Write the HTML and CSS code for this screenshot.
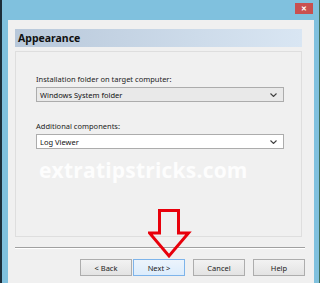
FILE: index.html
```html
<!DOCTYPE html>
<html lang="en">
<head>
    <meta charset="UTF-8">
    <title>Setup - Appearance</title>
    <link rel="stylesheet" href="styles.css">
</head>
<body>

<div class="frame">
    <!-- title bar -->
    <div class="titlebar">
        <div class="close-btn">&#x2715;</div>
    </div>

    <!-- dialog client area -->
    <div class="client">
        <div class="page-header">Appearance</div>

        <div class="panel">
            <label class="field-label">Installation folder on target computer:</label>
            <div class="combo combo-gray">
                <span>Windows System folder</span>
                <svg class="chev" width="7" height="4" viewBox="0 0 7 4"><path d="M0.5 0.5 L3.5 3.5 L6.5 0.5" fill="none" stroke="#404040" stroke-width="1.1"/></svg>
            </div>

            <label class="field-label second">Additional components:</label>
            <div class="combo">
                <span>Log Viewer</span>
                <svg class="chev" width="7" height="4" viewBox="0 0 7 4"><path d="M0.5 0.5 L3.5 3.5 L6.5 0.5" fill="none" stroke="#404040" stroke-width="1.1"/></svg>
            </div>

            <div class="watermark">extratipstricks.com</div>
        </div>

        <div class="separator"></div>

        <div class="buttons">
            <button class="btn">&lt; Back</button>
            <button class="btn btn-default">Next &gt;</button>
            <button class="btn gap">Cancel</button>
            <button class="btn gap">Help</button>
        </div>
    </div>

    <!-- red arrow annotation -->
    <svg class="arrow" width="44" height="52" viewBox="148 208 44 52">
        <polygon points="159.5,210.5 178.5,210.5 178.5,233 188.5,233 169,256 149.5,233 159.5,233" fill="none" stroke="#e8000b" stroke-width="3"/>
    </svg>
</div>

</body>
</html>
```

FILE: styles.css
```css
/* general */
body {
    margin: 0;
    padding: 0;
    width: 320px;
    height: 283px;
    overflow: hidden;
    font-family: 'Noto Sans', 'Liberation Sans', sans-serif;
    color: #1a1a1a;
}

.frame {
    position: relative;
    width: 320px;
    height: 283px;
    background: #80c1de;
    border-left: 2px solid #1d2e3a;
    border-right: 1px solid #3f6e5a;
    box-sizing: border-box;
    display: flex;
    flex-direction: column;
}

/* title bar */
.titlebar {
    height: 20px;
    display: flex;
    justify-content: flex-end;
    padding-top: 3px;
    padding-right: 6px;
    box-sizing: border-box;
}

.close-btn {
    width: 18px;
    height: 11px;
    background: #c9504f;
    color: #fff;
    font-size: 7px;
    font-weight: bold;
    line-height: 11px;
    text-align: center;
}

/* client */
.client {
    flex: 1;
    margin-left: 6px;
    margin-right: 5px;
    background: #f0f0f0;
    padding: 9px 0 0 7px;
    display: flex;
    flex-direction: column;
}

.page-header {
    width: 287px;
    height: 18px;
    box-sizing: border-box;
    padding-left: 3px;
    background: linear-gradient(to right, #b8c8da, #d9e6f3);
    font-size: 10.5px;
    font-weight: bold;
    line-height: 18px;
    color: #111;
}

.panel {
    width: 287px;
    height: 186px;
    margin-top: 4px;
    border: 1px solid #dedede;
    box-sizing: border-box;
    padding: 22px 0 0 20px;
    display: flex;
    flex-direction: column;
}

.field-label {
    font-size: 7.5px;
    line-height: 10px;
    color: #222;
    margin-bottom: 3px;
}

.field-label.second {
    margin-top: 19px;
}

.combo {
    width: 248px;
    height: 15px;
    box-sizing: border-box;
    border: 1px solid #acacac;
    background: #fff;
    display: flex;
    align-items: center;
    justify-content: space-between;
    padding: 0 6px 0 3px;
    font-size: 7.5px;
    color: #111;
}

.combo-gray {
    background: #e9e9e9;
}

.watermark {
    margin-top: 7px;
    margin-left: 3px;
    font-family: 'Open Sans', 'Noto Sans', sans-serif;
    font-size: 21px;
    font-weight: bold;
    letter-spacing: 0.2px;
    line-height: 28px;
    color: #fdfdfd;
}

/* bottom */
.separator {
    width: 290px;
    height: 1px;
    margin-top: 10px;
    background: #a0a0a0;
    border-bottom: 1px solid #fff;
}

.buttons {
    display: flex;
    margin-top: 10px;
    padding-left: 65px;
}

.btn {
    width: 52px;
    height: 17px;
    box-sizing: border-box;
    border: 1px solid #adadad;
    background: linear-gradient(#f2f2f2, #e3e3e3);
    font-family: 'Noto Sans', 'Liberation Sans', sans-serif;
    font-size: 7.5px;
    color: #222;
    padding: 0;
    margin-right: 1px;
}

.btn-default {
    border-color: #7eb4ea;
    background: linear-gradient(#ecf4fc, #dcecfc);
}

.btn.gap {
    margin-left: 7px;
}

/* annotation */
.arrow {
    position: absolute;
    left: 146px;
    top: 208px;
}
```
